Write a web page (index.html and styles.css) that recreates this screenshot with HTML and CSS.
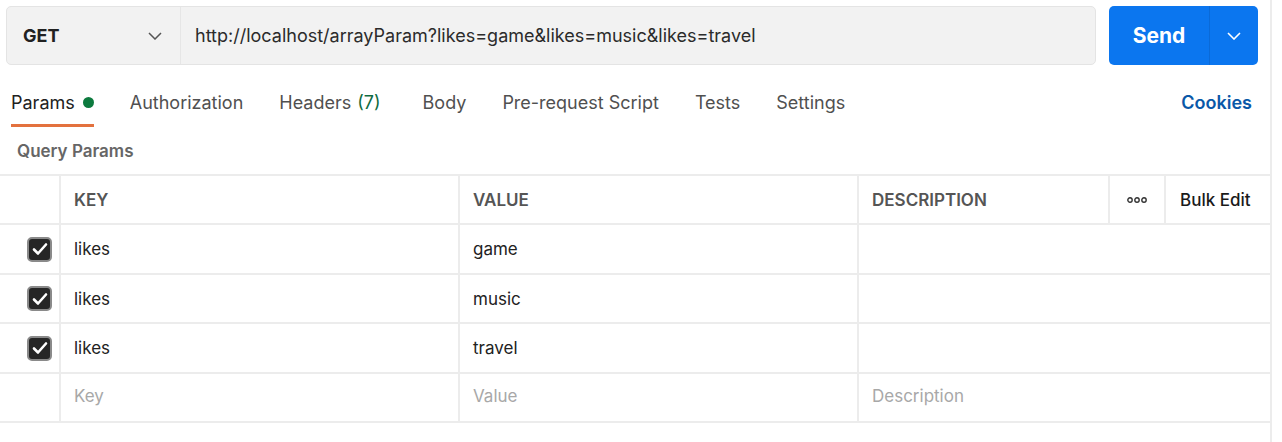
FILE: index.html
```html
<!DOCTYPE html>
<html>
<head>
<meta charset="utf-8">
<link rel="stylesheet" href="styles.css">
</head>
<body>
<div class="page">
  <div class="request-bar">
    <div class="url-group">
      <div class="method">
        <span>GET</span>
        <svg class="chev" width="14" height="8" viewBox="0 0 14 8"><path d="M1 1l6 6 6-6" fill="none" stroke="#555" stroke-width="1.5"/></svg>
      </div>
      <div class="url">http://localhost/arrayParam?likes=game&amp;likes=music&amp;likes=travel</div>
    </div>
    <div class="send">
      <span class="send-label">Send</span>
      <span class="send-drop"><svg width="14" height="8" viewBox="0 0 14 8"><path d="M1 1l6 6 6-6" fill="none" stroke="#fff" stroke-width="1.6"/></svg></span>
    </div>
  </div>

  <div class="tabs">
    <div class="tab active">Params <span class="dot"></span></div>
    <div class="tab">Authorization</div>
    <div class="tab">Headers <span class="count">(7)</span></div>
    <div class="tab tab-body">Body</div>
    <div class="tab">Pre-request Script</div>
    <div class="tab">Tests</div>
    <div class="tab">Settings</div>
    <div class="cookies">Cookies</div>
  </div>

  <div class="section-title">Query Params</div>

  <div class="table">
    <div class="cell head"></div>
    <div class="cell head">KEY</div>
    <div class="cell head">VALUE</div>
    <div class="cell head">DESCRIPTION</div>
    <div class="cell head dots"><svg width="20" height="6" viewBox="0 0 20 6"><circle cx="3" cy="3" r="2.2" fill="none" stroke="#333" stroke-width="1.4"/><circle cx="10" cy="3" r="2.2" fill="none" stroke="#333" stroke-width="1.4"/><circle cx="17" cy="3" r="2.2" fill="none" stroke="#333" stroke-width="1.4"/></svg></div>
    <div class="cell head bulk">Bulk Edit</div>

    <div class="cell check"><span class="cb"><svg width="16" height="14" viewBox="0 0 16 14"><path d="M2 7.5l4 4 8-9" fill="none" stroke="#fff" stroke-width="2.6" stroke-linecap="round" stroke-linejoin="round"/></svg></span></div>
    <div class="cell">likes</div>
    <div class="cell">game</div>
    <div class="cell span3"></div>

    <div class="cell check"><span class="cb"><svg width="16" height="14" viewBox="0 0 16 14"><path d="M2 7.5l4 4 8-9" fill="none" stroke="#fff" stroke-width="2.6" stroke-linecap="round" stroke-linejoin="round"/></svg></span></div>
    <div class="cell">likes</div>
    <div class="cell">music</div>
    <div class="cell span3"></div>

    <div class="cell check"><span class="cb"><svg width="16" height="14" viewBox="0 0 16 14"><path d="M2 7.5l4 4 8-9" fill="none" stroke="#fff" stroke-width="2.6" stroke-linecap="round" stroke-linejoin="round"/></svg></span></div>
    <div class="cell">likes</div>
    <div class="cell">travel</div>
    <div class="cell span3"></div>

    <div class="cell check"></div>
    <div class="cell ph">Key</div>
    <div class="cell ph">Value</div>
    <div class="cell ph span3">Description</div>
  </div>
</div>
</body>
</html>
```

FILE: styles.css
```css
* { box-sizing: border-box; }
html, body { margin: 0; padding: 0; background: #fff; }
body {
  font-family: Inter, "Noto Sans", sans-serif;
  color: #212121;
}
.page {
  width: 1272px;
  height: 442px;
  border-right: 2px solid #ececec;
  overflow: hidden;
}
.request-bar {
  display: flex;
  padding: 6px 12px 0 6px;
  gap: 13px;
  height: 66px;
}
.url-group {
  display: flex;
  width: 1090px;
  height: 59px;
  background: #f2f2f2;
  border: 1px solid #e4e4e4;
  border-radius: 5px;
}
.method {
  width: 174px;
  display: flex;
  align-items: center;
  justify-content: space-between;
  padding: 0 18px 0 16px;
  font-weight: 700;
  font-size: 18px;
  border-right: 1px solid #e6e6e6;
}
.url {
  display: flex;
  align-items: center;
  padding-left: 14px;
  font-size: 18px;
  color: #2b2b2b;
}
.send {
  display: flex;
  width: 149px;
  height: 59px;
  background: #0b76ef;
  border-radius: 5px;
  color: #fff;
}
.send-label {
  width: 101px;
  display: flex;
  align-items: center;
  justify-content: center;
  font-weight: 700;
  font-size: 21px;
  border-right: 1px solid #0a6ad8;
}
.send-drop {
  flex: 1;
  display: flex;
  align-items: center;
  justify-content: center;
}
.tabs {
  display: flex;
  align-items: stretch;
  height: 61px;
  padding: 0 18px 0 11px;
  gap: 36px;
}
.tab {
  display: flex;
  align-items: center;
  font-size: 18px;
  color: #505050;
  padding-top: 15px;
  border-bottom: 3px solid transparent;
}
.tab.active {
  color: #212121;
  border-bottom-color: #e3713e;
}
.tab-body { margin-left: 6px; }
.dot {
  display: inline-block;
  width: 11px;
  height: 11px;
  border-radius: 50%;
  background: #0c7a3e;
  margin-left: 8px;
}
.count { color: #0f6b42; margin-left: 6px; }
.cookies {
  margin-left: auto;
  display: flex;
  align-items: center;
  padding-top: 15px;
  padding-bottom: 3px;
  font-size: 18px;
  font-weight: 600;
  color: #0a58a8;
}
.section-title {
  height: 47px;
  display: flex;
  align-items: center;
  padding-left: 17px;
  font-size: 17px;
  font-weight: 600;
  color: #666;
}
.table {
  display: grid;
  grid-template-columns: 59px 397px 397px 249px 54px 106px;
  grid-template-rows: 47px 48px 47px 48px 47px;
  gap: 2px;
  background: #ececec;
  padding: 2px 0;
  width: 1270px;
}
.cell {
  background: #fff;
  display: flex;
  align-items: center;
  padding-left: 13px;
  font-size: 17px;
  color: #222;
}
.cell.head {
  font-weight: 600;
  color: #555;
}
.cell.dots {
  padding-left: 0;
  justify-content: center;
}
.cell.bulk {
  padding-left: 14px;
  font-weight: 500;
  color: #1a1a1a;
}
.span3 { grid-column: span 3; }
.cell.check {
  padding-left: 0;
  justify-content: flex-end;
  padding-right: 7px;
}
.cb {
  width: 25px;
  height: 25px;
  border-radius: 5px;
  background: #262626;
  border: 2px solid #8a8a8a;
  display: flex;
  align-items: center;
  justify-content: center;
}
.ph { color: #a8a8a8; padding-bottom: 3px; }
```
